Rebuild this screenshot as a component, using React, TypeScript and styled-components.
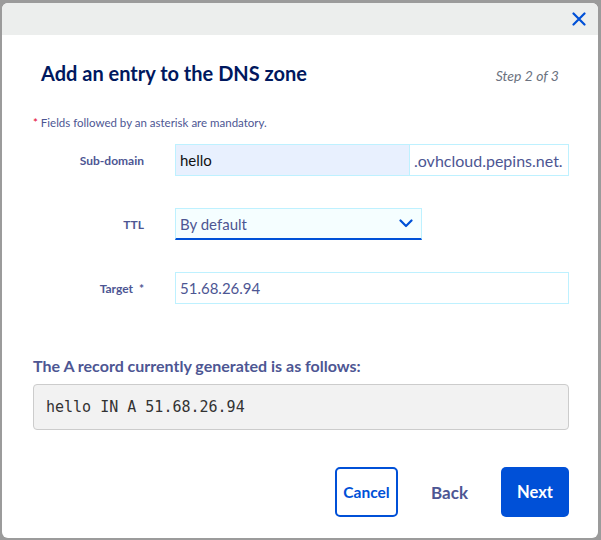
import styled, {createGlobalStyle} from "styled-components";

const GlobalStyle = createGlobalStyle`
    html, body {
        margin: 0;
        padding: 0;
        background: #9b9b9b;
        font-family: Lato, "Liberation Sans", sans-serif;
    }
`

const Overlay = styled.div`
    width: 601px;
    height: 540px;
    overflow: hidden;
    padding: 3px 0 0 2px;
    box-sizing: border-box;
`

const Modal = styled.div`
    width: 596px;
    height: 535px;
    background: #fff;
    border-radius: 6px;
    overflow: hidden;
    display: flex;
    flex-direction: column;
`

const ModalHeader = styled.div`
    height: 32px;
    background: #eceeed;
    display: flex;
    justify-content: flex-end;
    align-items: center;
    padding-right: 12px;
`

const CloseButton = styled.button`
    border: none;
    background: none;
    padding: 0;
    display: flex;
    cursor: pointer;
`

const Body = styled.div`
    padding: 0 29px 0 31px;
    display: flex;
    flex-direction: column;
`

const TitleRow = styled.div`
    display: flex;
    justify-content: space-between;
    align-items: baseline;
    padding: 26px 10px 0 8px;
    height: 30px;
`

const Title = styled.h2`
    margin: 0;
    font-size: 20px;
    font-weight: 700;
    color: #00185e;
`

const StepText = styled.span`
    font-size: 14px;
    font-style: italic;
    color: #6b7280;
`

const Mandatory = styled.p`
    margin: 25px 0 0 0;
    font-size: 11.5px;
    color: #4d5693;

    span {
        color: #e4002b;
    }
`

const Form = styled.div`
    display: grid;
    grid-template-columns: 111px 1fr;
    column-gap: 31px;
    row-gap: 32px;
    margin-top: 15px;
`

const Label = styled.label`
    font-size: 12px;
    font-weight: 700;
    color: #4d5693;
    text-align: right;
    align-self: center;
`

const FieldGroup = styled.div`
    display: flex;
    height: 32px;
`

const TextField = styled.div<{ $bg?: string }>`
    box-sizing: border-box;
    height: 32px;
    border: 1px solid #bef1ff;
    background: ${p => p.$bg || "#fff"};
    padding: 0 4px;
    display: flex;
    align-items: center;
    font-size: 15px;
    color: #4d5693;
`

const FilledInput = styled(TextField)`
    width: 235px;
    color: #111;
`

const Suffix = styled(TextField)`
    flex: 1;
    border-left: none;
    font-size: 16px;
`

const SelectBox = styled(TextField)`
    width: 247px;
    border-bottom: 2px solid #0050d7;
    justify-content: space-between;
    padding-right: 8px;
`

const RecordTitle = styled.h3`
    margin: 52px 0 0 0;
    font-size: 16px;
    font-weight: 700;
    color: #4d5693;
`

const RecordBox = styled.div`
    margin-top: 9px;
    height: 46px;
    box-sizing: border-box;
    background: #f2f2f2;
    border: 1px solid #cccccc;
    border-radius: 4px;
    display: flex;
    align-items: center;
    padding: 0 12px;
    font-family: "DejaVu Sans Mono", "Liberation Mono", monospace;
    font-size: 15px;
    color: #333;
`

const Footer = styled.div`
    display: flex;
    justify-content: flex-end;
    align-items: center;
    margin-top: 37px;
`

const Button = styled.button<{ $variant: "primary" | "secondary" | "ghost" }>`
    height: 50px;
    box-sizing: border-box;
    font-family: inherit;
    font-weight: 700;
    cursor: pointer;
    border-radius: 5px;
    padding: 0;
    ${p => p.$variant === "primary" && `
        background: #0050d7;
        color: #fff;
        border: none;
        font-size: 16.5px;
        width: 68px;
    `}
    ${p => p.$variant === "secondary" && `
        background: #fff;
        color: #0050d7;
        border: 2px solid #0050d7;
        font-size: 15.5px;
        width: 63px;
    `}
    ${p => p.$variant === "ghost" && `
        background: none;
        color: #4d5693;
        border: none;
        font-size: 17px;
        margin: 0 33px;
    `}
`

const App = () => {
    return (
        <>
            <GlobalStyle/>
            <Overlay>
                <Modal>
                    <ModalHeader>
                        <CloseButton>
                            <svg width="14" height="14" viewBox="0 0 14 14">
                                <path d="M1.5 1.5 L12.5 12.5 M12.5 1.5 L1.5 12.5" stroke="#0050d7" strokeWidth="2.2" strokeLinecap="round"/>
                            </svg>
                        </CloseButton>
                    </ModalHeader>
                    <Body>
                        <TitleRow>
                            <Title>Add an entry to the DNS zone</Title>
                            <StepText>Step 2 of 3</StepText>
                        </TitleRow>
                        <Mandatory><span>*</span> Fields followed by an asterisk are mandatory.</Mandatory>
                        <Form>
                            <Label>Sub-domain</Label>
                            <FieldGroup>
                                <FilledInput $bg="#e8f0fe">hello</FilledInput>
                                <Suffix>.ovhcloud.pepins.net.</Suffix>
                            </FieldGroup>

                            <Label>TTL</Label>
                            <SelectBox $bg="#f5feff">
                                By default
                                <svg width="14" height="9" viewBox="0 0 14 9">
                                    <path d="M1.5 1.5 L7 7 L12.5 1.5" stroke="#0050d7" strokeWidth="2.2" fill="none" strokeLinecap="round" strokeLinejoin="round"/>
                                </svg>
                            </SelectBox>

                            <Label>Target&nbsp; *</Label>
                            <TextField>51.68.26.94</TextField>
                        </Form>
                        <RecordTitle>The A record currently generated is as follows:</RecordTitle>
                        <RecordBox>hello IN A 51.68.26.94</RecordBox>
                        <Footer>
                            <Button $variant="secondary">Cancel</Button>
                            <Button $variant="ghost">Back</Button>
                            <Button $variant="primary">Next</Button>
                        </Footer>
                    </Body>
                </Modal>
            </Overlay>
        </>
    )
}

export default App;
